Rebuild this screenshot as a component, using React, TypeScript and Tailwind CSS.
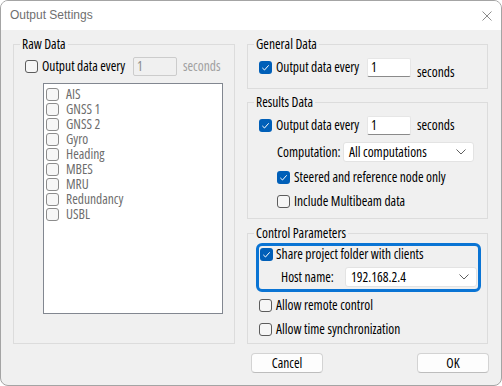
import React from "react";

const Check = ({ checked = false, disabled = false }: { checked?: boolean; disabled?: boolean }) => {
  if (checked) {
    return (
      <span className="w-[13px] h-[13px] shrink-0 rounded-[3px] bg-[#005fb8] flex items-center justify-center">
        <svg width="13" height="13" viewBox="0 0 13 13">
          <path d="M3.3 6.9 L5.5 9 L9.7 4.3" fill="none" stroke="#ffffff" strokeWidth="1" />
        </svg>
      </span>
    );
  }
  return (
    <span
      className={
        disabled
          ? "w-[13px] h-[13px] shrink-0 rounded-[3px] border border-[#8c8c8c] bg-[#f7f7f7]"
          : "w-[13px] h-[13px] shrink-0 rounded-[3px] border border-[#5c5c5c] bg-[#f6f6f6]"
      }
    />
  );
};

const Chevron = () => (
  <svg width="10" height="6" viewBox="0 0 10 6" className="shrink-0">
    <path d="M0.5 0.5 L5 5 L9.5 0.5" fill="none" stroke="#5f5f5f" strokeWidth="1" />
  </svg>
);

const Select = ({ value, w }: { value: string; w: string }) => (
  <div className={`${w} h-[20px] bg-white border border-[#e3e3e3] rounded-[3px] flex items-center pl-[5px] pr-[7px]`}>
    <span className="flex-1 text-black">{value}</span>
    <Chevron />
  </div>
);

const EveryRow = ({ low = false }: { low?: boolean }) => (
  <div className="flex items-center h-[19px]">
    <div className="w-[108px] flex items-center gap-[4px]">
      <Check checked />
      <span>Output data every</span>
    </div>
    <div className="w-[44px] h-[19px] bg-white border border-[#e6e6e6] border-b-[#8a8a8a] rounded-[2px] flex items-center pl-[3px]">
      1
    </div>
    <span className={low ? "ml-[6px] self-end mb-[-3px]" : "ml-[6px]"}>seconds</span>
  </div>
);

const items = ["AIS", "GNSS 1", "GNSS 2", "Gyro", "Heading", "MBES", "MRU", "Redundancy", "USBL"];

export default function App() {
  return (
    <div className="w-[502px] h-[386px] bg-[#f0f0f0] border border-[#a4a4a4] rounded-[8px] overflow-hidden flex flex-col text-[13.5px] leading-[15px] text-black font-['Open_Sans',sans-serif] font-stretch-condensed font-[380]">
      <div className="h-[29px] bg-white flex items-center pl-[9px] pr-[9px] shrink-0">
        <span className="text-[12px] text-[#6f6f6f] font-['Liberation_Sans',sans-serif] font-stretch-normal font-normal">
          Output Settings
        </span>
        <svg width="10" height="10" viewBox="0 0 10 10" className="ml-auto">
          <path d="M0.5 0.5 L9.5 9.5 M9.5 0.5 L0.5 9.5" stroke="#8c8c8c" strokeWidth="1" />
        </svg>
      </div>
      <div className="flex-1 px-[12px] pt-[6px] flex flex-col">
        <div className="flex gap-[12px]">
          {/* Left column */}
          <fieldset className="w-[222px] h-[308px] border border-[#dcdcdc] m-0 p-0">
            <legend className="ml-[6px] px-[2px] leading-[16px]">Raw Data</legend>
            <div className="pl-[11px] pt-[5px]">
              <div className="flex items-center h-[19px]">
                <div className="w-[108px] flex items-center gap-[4px]">
                  <Check />
                  <span>Output data every</span>
                </div>
                <div className="w-[44px] h-[19px] bg-[#f0f0f0] border border-[#cccccc] rounded-[2px] flex items-center pl-[3px] text-[#8d8d8d]">
                  1
                </div>
                <span className="ml-[6px] text-[#a0a0a0]">seconds</span>
              </div>
              <div className="ml-[18px] mt-[7px] w-[180px] h-[231px] bg-white border border-[#828790] pl-[2px] pt-[3px]">
                {items.map((it) => (
                  <div key={it} className="flex items-center h-[15px] gap-[7px]">
                    <Check disabled />
                    <span className="text-[#6d6d6d] leading-[15px]">{it}</span>
                  </div>
                ))}
              </div>
            </div>
          </fieldset>

          {/* Right column */}
          <div className="w-[241px] flex flex-col">
            <fieldset className="h-[53px] border border-[#dcdcdc] m-0 p-0">
              <legend className="ml-[6px] px-[2px] leading-[16px]">General Data</legend>
              <div className="pl-[11px] pt-[6px]">
                <EveryRow low />
              </div>
            </fieldset>

            <fieldset className="mt-[5px] h-[125px] border border-[#dcdcdc] m-0 p-0">
              <legend className="ml-[6px] px-[2px] leading-[16px]">Results Data</legend>
              <div className="pl-[11px] pt-[6px]">
                <EveryRow />
                <div className="ml-[18px] mt-[7px] flex items-center h-[20px]">
                  <span className="w-[66px]">Computation:</span>
                  <Select value="All computations" w="w-[131px]" />
                </div>
                <div className="ml-[18px] mt-[8px] flex items-center h-[15px] gap-[4px]">
                  <Check checked />
                  <span>Steered and reference node only</span>
                </div>
                <div className="ml-[18px] mt-[9px] flex items-center h-[15px] gap-[4px]">
                  <Check />
                  <span>Include Multibeam data</span>
                </div>
              </div>
            </fieldset>

            <fieldset className="mt-[6px] h-[119px] border border-[#dcdcdc] m-0 p-0">
              <legend className="ml-[6px] px-[2px] leading-[16px]">Control Parameters</legend>
              <div className="pl-[8px] pt-[2px]">
                <div className="w-[225px] h-[49px] border-[3px] border-[#0a74d4] rounded-[6px] pl-[1px] pt-[1px]">
                  <div className="flex items-center h-[15px] gap-[3px]">
                    <Check checked />
                    <span>Share project folder with clients</span>
                  </div>
                  <div className="mt-[5px] flex items-center h-[20px]">
                    <span className="ml-[21px] w-[64px]">Host name:</span>
                    <Select value="192.168.2.4" w="w-[132px]" />
                  </div>
                </div>
                <div className="ml-[3px] mt-[6px] flex items-center h-[15px] gap-[4px]">
                  <Check />
                  <span>Allow remote control</span>
                </div>
                <div className="ml-[3px] mt-[9px] flex items-center h-[15px] gap-[4px]">
                  <Check />
                  <span>Allow time synchronization</span>
                </div>
              </div>
            </fieldset>
          </div>
        </div>

        <div className="mt-[9px] flex">
          <div className="w-[238px] shrink-0" />
          <button className="w-[72px] h-[20px] bg-[#fdfdfd] border border-[#d3d3d3] border-b-[#bdbdbd] rounded-[4px] flex items-center justify-center">
            Cancel
          </button>
          <button className="ml-auto w-[72px] h-[20px] bg-[#fdfdfd] border border-[#d3d3d3] border-b-[#bdbdbd] rounded-[4px] flex items-center justify-center">
            OK
          </button>
        </div>
      </div>
    </div>
  );
}
